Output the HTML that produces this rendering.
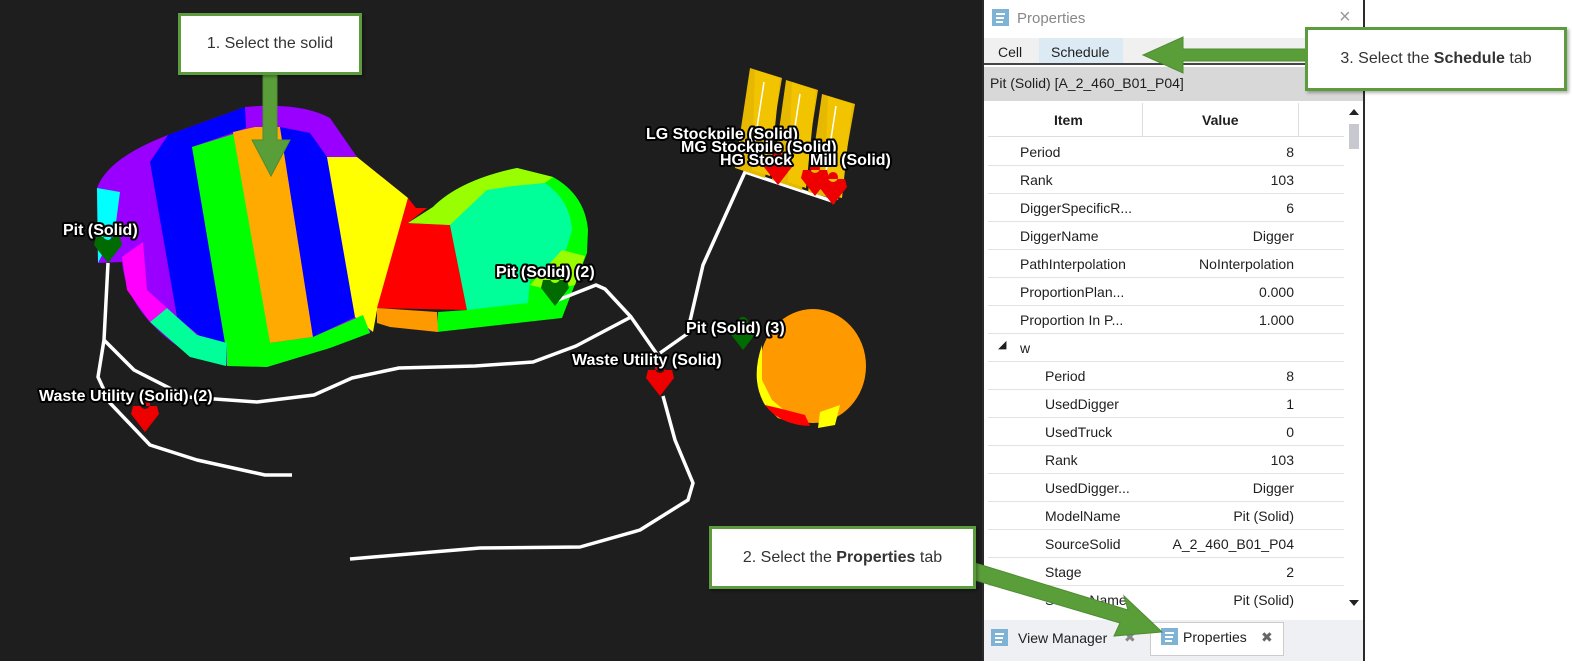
<!DOCTYPE html>
<html><head><meta charset="utf-8"><style>
*{margin:0;padding:0;box-sizing:border-box}
body{width:1572px;height:667px;background:#fff;position:relative;overflow:hidden;font-family:"Liberation Sans",sans-serif}
#scene{position:absolute;left:0;top:0}
.lbl{font:bold 16px "Liberation Sans",sans-serif;fill:#fff;stroke:#000;stroke-width:4px;paint-order:stroke;stroke-linejoin:round}
#panel{position:absolute;left:982px;top:0;width:383px;height:661px;background:#fff;border:2px solid #2a2a2a;border-top:none;font-size:14px;color:#1e1e1e}
.ico{position:absolute;width:17px;height:17px;background:#7fb3d5}
.ico i{position:absolute;left:4px;height:2px;background:#fff}
.row{position:absolute;left:4px;width:356px;height:28px;border-bottom:1px solid #e3e3e3}
.row .k{position:absolute;left:32px;top:6px}
.row .v{position:absolute;right:50px;top:6px}
.callout{position:absolute;background:#fff;border:3px solid #5c9c3e;font-size:16px;color:#333;display:flex;align-items:center;justify-content:center;box-shadow:2px 2px 3px rgba(0,0,0,.3)}
</style></head><body>
<svg id="scene" width="1572" height="667">
<rect x="0" y="0" width="983" height="661" fill="#1e1e1e"/>
<path d="M97,188 Q108,158 168,135 L245,107 Q300,102 330,118 L357,157 L408,198 L377,310 L370,333 L330,346 L290,360 L267,367 L227,365 Q185,360 150,322 Q125,295 122,262 L98,263 Z" fill="#9900ff"/>
<polygon points="150,162 168,135 245,107 246,128 192,147 225,343 200,336 177,317" fill="#0000ff"/>
<polygon points="192,147 240,132 270,343 225,343" fill="#00ff00"/>
<polygon points="233,132 255,127 280,127 313,337 270,343" fill="#ffaa00"/>
<polygon points="280,127 310,133 327,157 355,317 313,337" fill="#0000ff"/>
<polygon points="327,157 357,157 408,198 377,310 373,332 355,317" fill="#ffff00"/>
<polygon points="227,343 270,343 313,337 363,315 370,333 330,348 267,367 227,366" fill="#00ff00"/>
<polygon points="150,322 167,308 197,335 227,343 226,366 190,357" fill="#00ff99"/>
<polygon points="122,257 143,242 147,290 167,308 150,322 127,290" fill="#ff00ff"/>
<polygon points="97,188 120,192 115,230 98,263" fill="#00ffff"/>
<polygon points="408,198 416,208 427,208 408,223 450,225 467,310 377,308" fill="#ff0000"/>
<path d="M408,223 L433,207 Q460,180 517,168 L553,177 Q585,195 588,230 L587,253 L562,318 L437,332 L438,312 L467,310 L450,225 Z" fill="#00ff00"/>
<path d="M408,223 L433,207 Q460,180 517,168 L553,177 L545,183 L513,188 L487,190 L450,225 Z" fill="#99ff00"/>
<path d="M450,225 L487,190 L513,186 L545,183 Q570,200 572,230 L566,250 L545,270 L530,280 L528,303 L467,310 Z" fill="#00ff99"/>
<polygon points="562,250 585,256 575,285 550,290 530,285" fill="#99ff00"/>
<polygon points="377,308 437,312 438,332 390,327 377,323" fill="#ff9900"/>
<g fill="none" stroke="#fff" stroke-width="3.5" stroke-linejoin="round">
<polyline points="108,263 104,340 98,377 110,403 150,445 197,460 265,475 292,475"/>
<polyline points="104,340 134,370 187,397 257,402 314,395 352,378 399,368 475,366 533,362 576,346 631,317"/>
<polyline points="558,300 596,285 605,289 631,317 661,360"/>
<polyline points="660,353 687,334 703,265 745,172 835,202"/>
<polyline points="663,396 675,440 693,483 688,500 640,530 580,547 480,548 350,559"/>
</g>
<ellipse cx="813" cy="366" rx="53" ry="57" fill="#ff9900"/>
<path d="M762,345 Q750,380 765,405 L778,418 L800,425 L790,415 L772,400 L762,380 Z" fill="#ffff00"/>
<path d="M765,405 Q780,425 810,426 L805,415 L778,408 Z" fill="#ff0000"/>
<polygon points="820,412 840,405 835,425 818,428" fill="#ffff00"/>
<g>
<polygon points="750,68 782,78 765,178 735,168" fill="#e6b800"/>
<polygon points="755,70 780,78 770,176 752,170" fill="#f2c400"/>
<polygon points="786,80 818,90 802,190 772,180" fill="#e6b800"/>
<polygon points="792,82 816,90 806,188 788,182" fill="#f2c400"/>
<polygon points="822,94 855,104 838,200 808,192" fill="#e6b800"/>
<polygon points="828,96 852,104 842,198 824,194" fill="#f2c400"/>
<line x1="764" y1="82" x2="752" y2="160" stroke="#fff" stroke-width="1.5"/>
<line x1="800" y1="94" x2="788" y2="172" stroke="#fff" stroke-width="1.5"/>
<line x1="836" y1="106" x2="824" y2="185" stroke="#fff" stroke-width="1.5"/>
</g>
<defs><path id="pin" fill-rule="evenodd" d="M0,0 L-14,-18 L-12,-26 L12,-26 L14,-18 Z M0,-28 m-5,0 a5,5 0 1 0 10,0 a5,5 0 1 0 -10,0 Z"/></defs>
<use href="#pin" x="108" y="263" fill="#006b00"/>
<use href="#pin" x="145" y="432" fill="#ee0000"/>
<use href="#pin" x="555" y="306" fill="#006b00"/>
<use href="#pin" x="660" y="396" fill="#ee0000"/>
<use href="#pin" x="743" y="350" fill="#006b00"/>
<use href="#pin" x="778" y="185" fill="#ee0000"/>
<use href="#pin" x="815" y="196" fill="#ee0000"/>
<use href="#pin" x="833" y="205" fill="#ee0000"/>
<text class="lbl" x="63" y="235">Pit (Solid)</text>
<text class="lbl" x="39" y="401">Waste Utility (Solid) (2)</text>
<text class="lbl" x="496" y="277">Pit (Solid) (2)</text>
<text class="lbl" x="686" y="333">Pit (Solid) (3)</text>
<text class="lbl" x="572" y="365">Waste Utility (Solid)</text>
<text class="lbl" x="646" y="139">LG Stockpile (Solid)</text>
<text class="lbl" x="681" y="152">MG Stockpile (Solid)</text>
<text class="lbl" x="720" y="165">HG Stock</text>
<text class="lbl" x="810" y="165">Mill (Solid)</text>
</svg>

<div id="panel">
 <div class="ico" style="left:8px;top:9px"><i style="top:4px;width:9px"></i><i style="top:8px;width:8px"></i><i style="top:12px;width:7px"></i></div>
 <div style="position:absolute;left:33px;top:10px;font-size:15px;color:#888">Properties</div>
 <div style="position:absolute;left:355px;top:6px;font-size:20px;color:#999">×</div>
 <div style="position:absolute;left:0;top:38px;width:379px;height:27px;background:#f0f0f0;border-bottom:2px solid #444">
  <div style="position:absolute;left:14px;top:6px">Cell</div>
  <div style="position:absolute;left:55px;top:0;width:84px;height:25px;background:#dbeaf3"><span style="position:absolute;left:12px;top:6px">Schedule</span></div>
 </div>
 <div style="position:absolute;left:0;top:67px;width:379px;height:34px;background:#d8d8d8"><span style="position:absolute;left:6px;top:8px">Pit (Solid) [A_2_460_B01_P04]</span></div>
 <div style="position:absolute;left:4px;top:103px;width:356px;height:34px;border-bottom:1px solid #ddd;font-weight:bold">
  <span style="position:absolute;left:66px;top:9px">Item</span>
  <div style="position:absolute;left:154px;top:0;width:1px;height:34px;background:#ddd"></div>
  <span style="position:absolute;left:214px;top:9px">Value</span>
  <div style="position:absolute;left:310px;top:0;width:1px;height:34px;background:#ddd"></div>
 </div>
 <div style="position:absolute;left:365px;top:109px;border:5px solid transparent;border-bottom:6px solid #222;border-top:none"></div>
 <div style="position:absolute;left:365px;top:124px;width:10px;height:25px;background:#c8c8d0"></div>
 <div style="position:absolute;left:365px;top:600px;border:5px solid transparent;border-top:6px solid #222;border-bottom:none"></div>
 <div style="position:absolute;left:0;top:138px;width:362px;height:474px;overflow:hidden">
  <div class="row" style="top:0"><span class="k">Period</span><span class="v">8</span></div>
  <div class="row" style="top:28px"><span class="k">Rank</span><span class="v">103</span></div>
  <div class="row" style="top:56px"><span class="k">DiggerSpecificR...</span><span class="v">6</span></div>
  <div class="row" style="top:84px"><span class="k">DiggerName</span><span class="v">Digger</span></div>
  <div class="row" style="top:112px"><span class="k">PathInterpolation</span><span class="v">NoInterpolation</span></div>
  <div class="row" style="top:140px"><span class="k">ProportionPlan...</span><span class="v">0.000</span></div>
  <div class="row" style="top:168px"><span class="k">Proportion In P...</span><span class="v">1.000</span></div>
  <div class="row" style="top:196px"><span style="position:absolute;left:10px;top:4px;font-size:11px">◢</span><span class="k">w</span></div>
  <div class="row" style="top:224px"><span class="k" style="left:57px">Period</span><span class="v">8</span></div>
  <div class="row" style="top:252px"><span class="k" style="left:57px">UsedDigger</span><span class="v">1</span></div>
  <div class="row" style="top:280px"><span class="k" style="left:57px">UsedTruck</span><span class="v">0</span></div>
  <div class="row" style="top:308px"><span class="k" style="left:57px">Rank</span><span class="v">103</span></div>
  <div class="row" style="top:336px"><span class="k" style="left:57px">UsedDigger...</span><span class="v">Digger</span></div>
  <div class="row" style="top:364px"><span class="k" style="left:57px">ModelName</span><span class="v">Pit (Solid)</span></div>
  <div class="row" style="top:392px"><span class="k" style="left:57px">SourceSolid</span><span class="v">A_2_460_B01_P04</span></div>
  <div class="row" style="top:420px"><span class="k" style="left:57px">Stage</span><span class="v">2</span></div>
  <div class="row" style="top:448px"><span class="k" style="left:57px">SourceName</span><span class="v">Pit (Solid)</span></div>
 </div>
 <div style="position:absolute;left:0;top:620px;width:379px;height:41px;background:#eef0f3">
  <div class="ico" style="left:7px;top:9px"><i style="top:4px;width:9px"></i><i style="top:8px;width:8px"></i><i style="top:12px;width:7px"></i></div>
  <span style="position:absolute;left:34px;top:10px">View Manager</span><span style="position:absolute;left:140px;top:9px;color:#888">✖</span>
  <div style="position:absolute;left:166px;top:2px;width:134px;height:34px;background:#fff;border:1px solid #ccc">
   <div class="ico" style="left:10px;top:5px"><i style="top:4px;width:9px"></i><i style="top:8px;width:8px"></i><i style="top:12px;width:7px"></i></div>
   <span style="position:absolute;left:32px;top:6px">Properties</span><span style="position:absolute;left:110px;top:6px;color:#666">✖</span>
  </div>
 </div>
</div>

<svg style="position:absolute;left:0;top:0" width="1572" height="667">
 <g fill="#5a9e3a" stroke="#4e8c32" stroke-width="1">
  <polygon points="263,74 277,74 277,140 290,140 271,176 252,140 263,140"/>
  <polygon points="1306,49 1183,49 1183,37 1143,55 1183,73 1183,61 1306,61"/>
  <polygon points="975,563 1128,610 1124,596 1162,632 1114,636 1120,623 971,579"/>
 </g>
</svg>
<div class="callout" style="left:178px;top:13px;width:184px;height:62px">1. Select the solid</div>
<div class="callout" style="left:1305px;top:27px;width:262px;height:64px">3. Select the&nbsp;<b>Schedule</b>&nbsp;tab</div>
<div class="callout" style="left:709px;top:526px;width:267px;height:63px">2. Select the&nbsp;<b>Properties</b>&nbsp;tab</div>
</body></html>
